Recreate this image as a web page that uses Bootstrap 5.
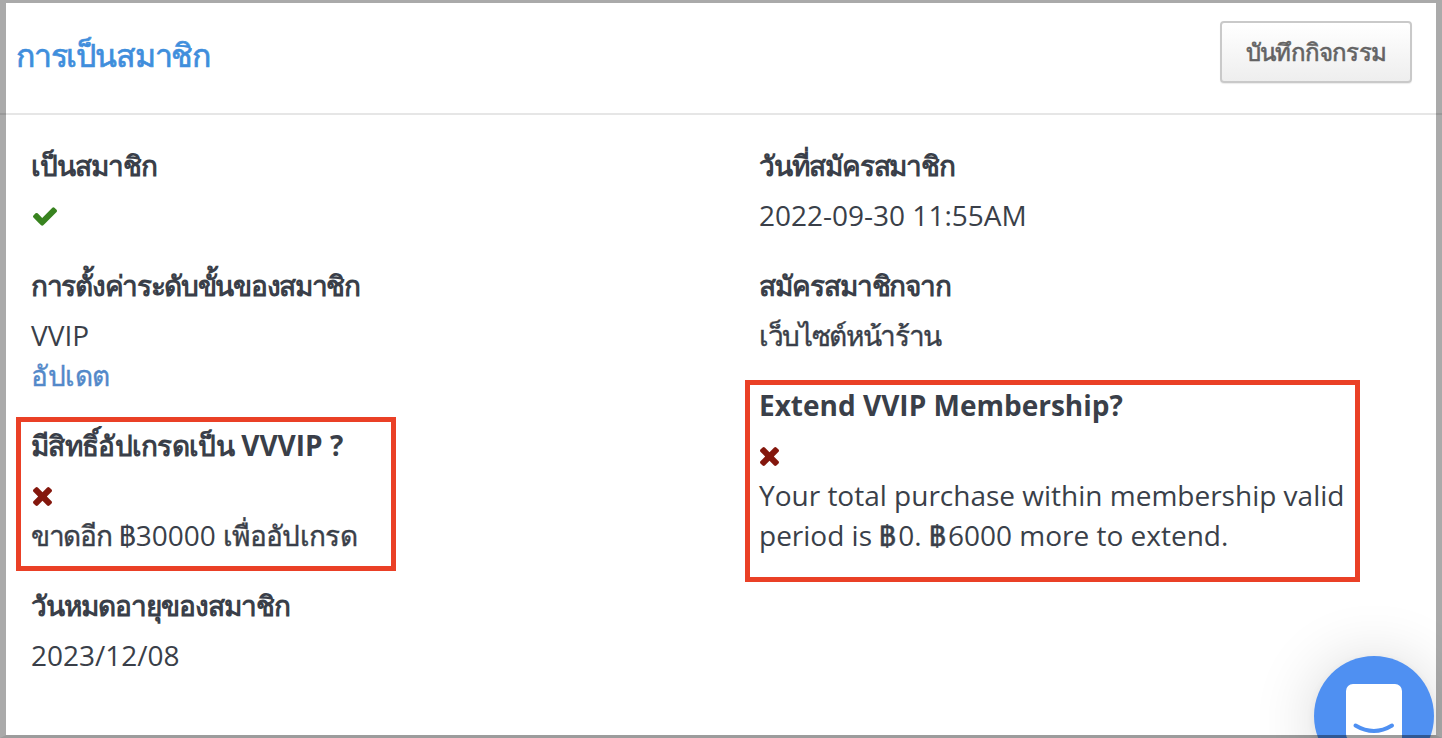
<!DOCTYPE html>
<html lang="th">
<head>
<meta charset="utf-8">
<meta name="viewport" content="width=device-width, initial-scale=1">
<title>การเป็นสมาชิก</title>
<link href="https://cdn.jsdelivr.net/npm/bootstrap@5.3.0/dist/css/bootstrap.min.css" rel="stylesheet">
<style>
  body { font-family: "Open Sans", "Noto Sans", sans-serif; font-size: 28px; line-height: 40px; color: #3a3f49; background: #fff; overflow: hidden; }
  .page { height: 738px; }
  .panel-head { height: 115px; border-bottom: 2px solid #e6e6e6; padding: 3px 30px 0 16px; }
  .panel-title { font-size: 32px; line-height: 40px; color: #3f8edc; font-weight: 400; padding-bottom: 6px; }
  .btn-log { width: 192px; height: 62px; margin-bottom: 12px; border: 2px solid #c9c9c9; border-radius: 4px; background: linear-gradient(#fff, #eee); color: #636363; font-size: 24px; box-shadow: 0 1px 1px rgba(0,0,0,.08); }
  .panel-main { padding: 30px 0 0 31px; }
  .col-left { width: 728px; }
  .col-right { width: 640px; }
  .field { position: relative; margin: 0 0 30px; }
  .field dt { font-weight: 700; margin-bottom: 10px; }
  .field dd { margin: 0; }
  .field div, .field dt, .field dd { white-space: nowrap; }
  .ico { height: 40px; padding: 2px 0 0 2px; }
  .col-right .ico { padding-left: 1px; }
  .marked::before { content: ""; position: absolute; border: 5px solid #ea4026; }
  .marked-a::before { left: -15px; top: -8px; width: 380px; height: 154px; }
  .marked-b::before { left: -14px; top: -5px; width: 615px; height: 202px; }
  .upd { color: #5389c9; text-decoration: none; }
  /* tighter tracking for the Thai runs */
  .t1 { letter-spacing: -1.18px; -webkit-text-stroke: .7px; }
  .t2 { letter-spacing: -.8px; -webkit-text-stroke: .6px; }
  .t3, .t9 { letter-spacing: -1px; }
  .t4 { letter-spacing: -1.3px; }
  .t5 { letter-spacing: -.5px; -webkit-text-stroke: .4px; }
  .t6 { letter-spacing: -.7px; }
  .t7 { letter-spacing: -1.3px; -webkit-text-stroke: .4px; }
  .t8 { letter-spacing: -.7px; -webkit-text-stroke: .4px; }
  .t10, .t11 { letter-spacing: -1.07px; }
  .t12 { letter-spacing: -1.35px; -webkit-text-stroke: .4px; }
  .baht { margin-right: 2px; -webkit-text-stroke: .4px; }
  .launcher { right: 8px; bottom: -38px; width: 120px; height: 120px; background: #4f90f2; box-shadow: 0 2px 12px rgba(0,0,0,.06), 0 4px 64px rgba(0,0,0,.16); }
  .shade { inset: 0; border: solid rgba(0,0,0,.335); border-width: 3px 6px; border-bottom-color: rgba(0,0,0,.39); pointer-events: none; z-index: 1050; }
</style>
</head>
<body>
<div class="page">
  <header class="panel-head d-flex justify-content-between align-items-center">
    <h1 class="panel-title m-0"><span class="t1">การเป็นสมาชิก</span></h1>
    <button class="btn btn-log p-0" type="button"><span class="t2">บันทึกกิจกรรม</span></button>
  </header>
  <main class="panel-main d-flex">
    <div class="col-left">
      <dl class="field"><dt><span class="t3">เป็นสมาชิก</span></dt>
        <dd class="ico d-flex align-items-center"><svg width="24" height="19" viewBox="121 334 1550 1188" fill="#38831f"><path d="M1671 566q0 40-28 68l-724 724-136 136q-28 28-68 28t-68-28l-136-136-362-362q-28-28-28-68t28-68l136-136q28-28 68-28t68 28l294 295 656-657q28-28 68-28t68 28l136 136q28 28 28 68z"/></svg></dd></dl>
      <dl class="field"><dt><span class="t4">การตั้งค่าระดับขั้นของสมาชิก</span></dt>
        <dd><div>VVIP</div><a class="upd d-block" href="#"><span class="t5">อัปเดต</span></a></dd></dl>
      <dl class="field marked marked-a"><dt><span class="t6">มีสิทธิ์อัปเกรดเป็น</span> VVVIP ?</dt>
        <dd><div class="ico d-flex align-items-center"><svg width="19" height="19" viewBox="302 366 1188 1188" fill="#84170d"><path d="M1490 1322q0 40-28 68l-136 136q-28 28-68 28t-68-28l-294-294-294 294q-28 28-68 28t-68-28l-136-136q-28-28-28-68t28-68l294-294-294-294q-28-28-28-68t28-68l136-136q28-28 68-28t68 28l294 294 294-294q28-28 68-28t68 28l136 136q28 28 28 68t-28 68l-294 294 294 294q28 28 28 68z"/></svg></div>
        <div><span class="t7">ขาดอีก</span> ฿30000 <span class="t8">เพื่ออัปเกรด</span></div></dd></dl>
      <dl class="field"><dt><span class="t9">วันหมดอายุของสมาชิก</span></dt><dd>2023/12/08</dd></dl>
    </div>
    <div class="col-right">
      <dl class="field"><dt><span class="t10">วันที่สมัครสมาชิก</span></dt><dd>2022-09-30 11:55AM</dd></dl>
      <dl class="field"><dt><span class="t11">สมัครสมาชิกจาก</span></dt><dd><span class="t12">เว็บไซต์หน้าร้าน</span></dd></dl>
      <dl class="field marked marked-b"><dt>Extend VVIP Membership?</dt>
        <dd><div class="ico d-flex align-items-center"><svg width="19" height="19" viewBox="302 366 1188 1188" fill="#84170d"><path d="M1490 1322q0 40-28 68l-136 136q-28 28-68 28t-68-28l-294-294-294 294q-28 28-68 28t-68-28l-136-136q-28-28-28-68t28-68l294-294-294-294q-28-28-28-68t28-68l136-136q28-28 68-28t68 28l294 294 294-294q28-28 68-28t68 28l136 136q28 28 28 68t-28 68l-294 294 294 294q28 28 28 68z"/></svg></div>
        <div>Your total purchase within membership valid<br>period is <span class="baht">฿</span>0. <span class="baht">฿</span>6000 more to extend.</div></dd></dl>
    </div>
  </main>
</div>
<div class="launcher position-fixed rounded-circle">
  <svg class="d-block" width="120" height="120" viewBox="0 0 120 120"><path d="M39 28h42a7 7 0 0 1 7 7v57l-16-7H39a7 7 0 0 1-7-7V35a7 7 0 0 1 7-7z" fill="#fff"/><path d="M41.500 69.500q18.500 11 36.500 0" fill="none" stroke="#4f90f2" stroke-width="4" stroke-linecap="round"/></svg>
</div>
<div class="shade position-fixed"></div>
<script src="https://cdn.jsdelivr.net/npm/bootstrap@5.3.0/dist/js/bootstrap.bundle.min.js"></script>
</body>
</html>
